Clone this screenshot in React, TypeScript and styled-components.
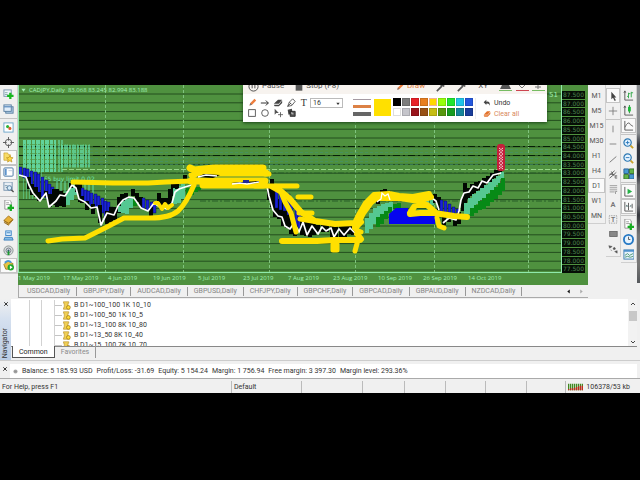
import React from "react";
import styled, { createGlobalStyle, css } from "styled-components";

const GlobalStyle = createGlobalStyle`
  * { box-sizing: border-box; }
  body { margin: 0; background: #000; font-family: Roboto, "Noto Sans", sans-serif; font-size: 7px; line-height: 10px; color: #333; }
  button, select { font: inherit; color: inherit; margin: 0; padding: 0; border: 0; background: none; }
  ul { list-style: none; margin: 0; padding: 0; }
`;

const Stage = styled.main`
  min-height: 100vh;
  padding: 85px 0 86px;
  background: #000;
`;
const Terminal = styled.div`
  background: #f0f0f0;
  overflow: hidden;
`;
const Workspace = styled.div`
  display: flex;
  position: relative;
`;
const ChartArea = styled.section`
  flex: 1;
  min-width: 0;
  display: flex;
  flex-direction: column;
`;

/* tool columns */
const ToolColumn = styled.div<{ $width: number; $top: number }>`
  width: ${(p) => p.$width}px;
  flex: none;
  align-self: flex-start;
  padding-top: ${(p) => p.$top}px;
  display: flex;
  flex-direction: column;
  align-items: center;
  border-right: 1px solid #cfcfcf;
  border-bottom: 1px solid #cfcfcf;
`;
const ToolButton = styled.button<{ $on?: boolean }>`
  width: 100%;
  height: 15px;
  display: grid;
  place-items: center;
  color: #555;
  ${(p) =>
    p.$on &&
    css`
      background: #fafafa;
      outline: 1px solid #c4c4c4;
      outline-offset: -1px;
    `}
`;
const Rule = styled.hr`
  width: 100%;
  height: 1px;
  margin: 1px 0;
  border: 0;
  background: #c4c4c4;
`;
const DesktopEdge = styled.div`
  width: 3px;
  flex: none;
  height: 198px;
  background: linear-gradient(#8a8d90 0 48px, #30333c 60px 90px, #737477 100px 120px, #34363c 130px, #777 150px 180px, #55585c);
`;

/* chart */
const Chart = styled.div`
  position: relative;
  background: #4f913f;
  color: #a0efb4;
`;
const PlotRow = styled.div`
  display: flex;
`;
const Plot = styled.svg`
  flex: 1;
  min-width: 0;
  height: 188px;
  display: block;
`;
const Prices = styled.div`
  width: 26px;
  flex: none;
  padding: 5px 3px 0 0;
  height: 188px;
  display: grid;
  grid-template-rows: repeat(21, 1fr);
`;
const Price = styled.span`
  background: #050d05;
  color: #4d8550;
  font: 6px/8px "DejaVu Sans", sans-serif;
  text-align: center;
  margin-top: 1px;
  overflow: hidden;
`;
const ChartTitle = styled.div`
  position: absolute;
  top: 1px;
  left: 3px;
  display: flex;
  align-items: center;
  gap: 3px;
  font: 6px/9px "Open Sans", sans-serif;
  white-space: pre;
`;
const AdviserLabel = styled.span`
  position: absolute;
  top: 5px;
  right: 30px;
  font: 7px/10px "DejaVu Sans", sans-serif;
`;
const Dates = styled.div`
  display: flex;
  height: 12px;
  overflow: hidden;
`;
const DateMark = styled.span`
  flex: 0 0 45px;
  white-space: nowrap;
  font: 6px/10px "Open Sans", sans-serif;
`;
const ChartTabs = styled.nav`
  height: 13px;
  display: flex;
  align-items: center;
  padding-left: 2px;
  border-left: 1px solid #aaa;
  border-bottom: 1px solid #aaa;
`;
const ChartTab = styled.button`
  padding: 0 6px;
  line-height: 9px;
  border-right: 1px solid #999;
  color: #858585;
`;
const TabArrows = styled.div`
  margin-left: auto;
  padding-right: 4px;
  display: flex;
  gap: 8px;
`;
const ArrowButton = styled.button<{ $dim?: boolean }>`
  display: grid;
  color: ${(p) => (p.$dim ? "#aaa" : "#111")};
`;

/* recorder overlay */
const Recorder = styled.div`
  position: absolute;
  top: 0;
  left: 243px;
  width: 304px;
  height: 37px;
  overflow: hidden;
  background: #fff;
  box-shadow: 0 1px 3px #1c4518;
`;
const RecorderTop = styled.div`
  height: 9px;
  padding: 0 2px 2px 5px;
  display: flex;
  align-items: flex-end;
  overflow: hidden;
  background: #f7f3ef;
  color: #555;
`;
const TopAction = styled.button<{ $hot?: boolean; $push?: boolean }>`
  display: flex;
  align-items: flex-end;
  gap: 3px;
  margin-right: 11px;
  margin-left: ${(p) => (p.$push ? "auto" : 0)};
  font-size: 8px;
  line-height: 12px;
  white-space: nowrap;
  color: ${(p) => (p.$hot ? "#e08040" : "#555")};
`;
const RecorderBody = styled.div`
  display: flex;
  align-items: flex-start;
  padding: 4px 0 0 3px;
`;
const PenGrid = styled.div`
  display: grid;
  grid-template-columns: repeat(5, 12px);
  grid-auto-rows: 10px;
  column-gap: 1px;
`;
const PenButton = styled.button`
  display: grid;
  place-items: center;
`;
const FontSize = styled.select`
  width: 33px;
  height: 10px;
  margin-right: 4px;
  padding-left: 2px;
  border: 1px solid #bbb;
  background: #fff;
  line-height: 8px;
  appearance: none;
`;
const SelectWrap = styled.label`
  position: relative;
  display: flex;
  svg { position: absolute; right: 7px; top: 4px; }
`;
const Weights = styled.div`
  height: 19px;
  margin: 0 3px 0 6px;
  padding: 1px 0;
  display: flex;
  flex-direction: column;
  justify-content: space-between;
`;
const Weight = styled.button<{ $h: number; $c: string }>`
  width: 18px;
  height: ${(p) => p.$h}px;
  background: ${(p) => p.$c};
`;
const CurrentColor = styled.button`
  width: 17px;
  height: 17px;
  margin: 1px 2px 0 0;
  background: #ffe000;
`;
const Palette = styled.div`
  display: grid;
  grid-template-columns: repeat(9, 8px);
  grid-auto-rows: 8px;
  gap: 2px 1px;
`;
const Swatch = styled.button<{ $c: string; $on?: boolean }>`
  background: ${(p) => p.$c};
  border: 1px solid ${(p) => (p.$on ? "#f0b090" : "#0002")};
`;
const Divider = styled.i`
  width: 1px;
  align-self: stretch;
  margin: 0 7px 0 2px;
  background: #eee;
`;
const History = styled.div`
  display: flex;
  flex-direction: column;
  align-items: flex-start;
  gap: 1px;
`;
const HistoryButton = styled.button<{ $hot?: boolean }>`
  display: flex;
  align-items: center;
  gap: 3px;
  white-space: nowrap;
  color: ${(p) => (p.$hot ? "#d98a5c" : "#333")};
`;

/* navigator */
const Navigator = styled.section`
  display: flex;
  padding-top: 1px;
  height: 62px;
`;
const NavHandle = styled.div`
  width: 11px;
  flex: none;
  display: flex;
  flex-direction: column;
  align-items: center;
  justify-content: space-between;
  padding-bottom: 2px;
  background: linear-gradient(#f0f0f0, #d5e0ef 20px, #b9cce4);
`;
const CloseButton = styled.button`
  height: 9px;
  display: grid;
  place-items: center;
`;
const NavName = styled.h2`
  margin: 0;
  writing-mode: vertical-rl;
  transform: rotate(180deg);
  font-size: 7px;
  line-height: 11px;
  font-weight: 400;
`;
const NavBody = styled.div`
  flex: 1;
  min-width: 0;
  padding-right: 3px;
`;
const NavList = styled.div`
  height: 48px;
  display: flex;
  background: #fff;
  border-bottom: 1px solid #888;
`;
const Tree = styled.ul`
  flex: 1;
  overflow: hidden;
  padding: 1px 0 0 18px;
`;
const TreeItem = styled.li`
  height: 10px;
  display: flex;
  align-items: center;
  white-space: pre;
`;
const Guide = styled.i`
  width: 12px;
  height: 10px;
  border-left: 1px solid #d2d2d2;
`;
const Branch = styled(Guide)`
  width: 8px;
  margin-left: 1px;
  background: linear-gradient(#c4c4c4, #c4c4c4) 0 5px / 7px 1px no-repeat;
`;
const ItemLabel = styled.span`
  margin-left: 3px;
`;
const Scrollbar = styled.div`
  width: 9px;
  display: flex;
  flex-direction: column;
  align-items: center;
  background: #f2f2f2;
`;
const Thumb = styled.div`
  width: 8px;
  height: 10px;
  margin: 3px 0 auto;
  background: #c8c8c8;
`;
const NavTabs = styled.div`
  display: flex;
  padding-left: 1px;
  margin-top: -1px;
`;
const NavTab = styled.button<{ $on?: boolean }>`
  height: 12px;
  padding: 0 6px;
  border-right: 1px solid #999;
  color: #8b8b8b;
  ${(p) =>
    p.$on &&
    css`
      position: relative;
      background: #fff;
      border: solid #555;
      border-width: 0 1px 1px;
      color: #222;
    `}
`;
const Account = styled.section`
  height: 18px;
  display: flex;
  padding: 3px 3px 0 0;
  border-top: 1px solid #ccc;
`;
const AccountHandle = styled.div`
  width: 10px;
  padding-left: 2px;
`;
const AccountLine = styled.div`
  flex: 1;
  height: 14px;
  display: flex;
  align-items: center;
  gap: 4px;
  padding-left: 3px;
  background: #fff;
  white-space: nowrap;
`;
const StatusBar = styled.footer`
  height: 15px;
  display: flex;
  align-items: stretch;
  padding-top: 2px;
  border-top: 1px solid #aaa;
  line-height: 11px;
  white-space: nowrap;
`;
const Status = styled.span<{ $w?: number }>`
  flex: ${(p) => (p.$w ? `0 0 ${p.$w}px` : "1")};
  padding-left: 2px;
  display: flex;
  align-items: center;
  gap: 3px;
  ${(p) => p.$w && "border-left: 1px solid #bbb;"}
`;

const glyphs: Record<string, React.ReactNode> = {
  newChart: <><rect x="1" y="1" width="8" height="7" fill="#eef5fb" stroke="#7794ad" /><path d="M2 4h3M2 6h3" stroke="#8aa" /><path d="M8 4v7M4.500 7.500h7" stroke="#17b81e" strokeWidth="2.500" /></>,
  profiles: <><rect x="3" y="3" width="8" height="7" fill="#b8d2ea" stroke="#557b9e" /><rect x="1" y="1" width="8" height="7" fill="#e2eefa" stroke="#557b9e" /><path d="M1 3h8" stroke="#6996c4" strokeWidth="1.500" /></>,
  market: <><rect x="1" y="1" width="10" height="10" fill="#fff" stroke="#6aa4c9" /><circle cx="5" cy="5" r="1.700" fill="#2eb338" /><circle cx="7.500" cy="7" r="1.700" fill="#e06030" /></>,
  cross: <><circle cx="6" cy="6" r="3.500" fill="none" stroke="#555" /><path d="M6 0v4M6 8v4M0 6h4M8 6h4" stroke="#555" /></>,
  star: <><path d="M1 3V1h4l1 2h2v6H1z" fill="#f8dc68" stroke="#c39b24" strokeWidth=".7" /><path d="M7.500 4l1 2 2.500.3-2 1.700.7 3-2.200-1.500L5 11l.7-3-2-1.700L6.500 6z" fill="#ffd944" stroke="#b98b16" strokeWidth=".7" /></>,
  panel: <><rect x="1" y="1" width="10" height="9" rx="1" fill="#fff" stroke="#44729f" /><path d="M2 2h2v7H2z" fill="#5d93cc" /><path d="M6 4h4" stroke="#bcd" /></>,
  tester: <><rect x="1" y="0" width="9" height="9" fill="#e8eef4" stroke="#7592ad" /><path d="M2 4h3M3 6h2" stroke="#79a" /><circle cx="7" cy="6.500" r="2.500" fill="#d7edfa" stroke="#557c9f" /><path d="M9 8.500L11.500 11" stroke="#555" strokeWidth="1.500" /></>,
  order: <><path d="M2 0h5l2 2v8H2z" fill="#fff" stroke="#777" strokeWidth=".8" /><path d="M3.500 3h3M3.500 5h4" stroke="#999" /><path d="M8.500 5v7M5 8.500h7" stroke="#16ad20" strokeWidth="2.500" /></>,
  book: <><path d="M1 6l5-5 5 4-5 6z" fill="#e7b138" stroke="#a77720" /><path d="M1 6l5 3 5-4M1 8l5 3" fill="none" stroke="#906617" /></>,
  server: <><rect x="3" y="1" width="6" height="5" fill="#d9efff" stroke="#3c84c7" /><path d="M4 3h4M2 8h8l1 3H1z" fill="#82bce9" stroke="#3f80bb" /></>,
  signal: <><circle cx="6" cy="6" r="5" fill="#d9dfdf" stroke="#87918f" /><circle cx="6" cy="6" r="2.700" fill="none" stroke="#778" /><path d="M6 6v5" stroke="#18a02c" strokeWidth="2" /><circle cx="6" cy="6" r="1" fill="#357" /></>,
  auto: <><path d="M1 5l4-4 6 3-2 6H3z" fill="#e9c345" stroke="#9a812a" /><path d="M2 3q4-4 7 0" stroke="#4b9ad3" strokeWidth="2" fill="none" /><circle cx="8.500" cy="8" r="3.500" fill="#20a82e" /><path d="M7.500 6l3 2-3 2z" fill="#fff" /></>,
  cursor: <path d="M4 1v9l2-2 2 4 1.500-.8-2-3.400H10z" fill="#444" />,
  plus: <path d="M6 1v10M1 6h10" stroke="#777" />,
  vline: <path d="M6 2v8" stroke="#777" />,
  hline: <path d="M2 6h8" stroke="#777" />,
  trend: <path d="M2 10l8-7" stroke="#666" />,
  channel: <><path d="M1 8l7-6M2 11l8-7M2 6l6 1M4 3l3 5" stroke="#555" fill="none" /><path d="M11 8H8.500v3H11M8.500 9.500H11" stroke="#555" fill="none" strokeWidth=".8" /></>,
  fibo: <path d="M2 2h9M2 4.500h9M2 7h9M2 9.500h6M9 9v3M9 9h2" stroke="#777" strokeWidth=".8" />,
  letterA: <text x="3" y="9.500" fontSize="9" fontWeight="600" fill="#777">A</text>,
  label: <><rect x="1.500" y="2" width="9" height="9" fill="none" stroke="#888" strokeDasharray="1 1" /><text x="3.500" y="9.500" fontSize="8" fontWeight="700" fill="#777">T</text></>,
  box: <rect x="2" y="3" width="9" height="6" fill="#888" stroke="#666" />,
  arrows: <path d="M1 2l4 1-3 2zM6 5l2-1 1 2-2 1zM8 9l3-1v3zM3 7l2 1" fill="#555" stroke="#555" strokeWidth=".6" />,
  bars: <><path d="M2 1v10h9M2 1L1 3M2 1l1 2" fill="none" stroke="#555" /><path d="M6 3v6M4.500 7H6M6 4h2M9 2v6M9 3h2" fill="none" stroke="#30a848" /></>,
  candles: <><path d="M2 1v10h9M2 1L1 3M2 1l1 2" fill="none" stroke="#555" /><path d="M7 0v9" stroke="#208b2e" /><path d="M5.500 2h3v5h-3z" fill="#19ba35" /></>,
  line: <><path d="M2 1v10h9" fill="none" stroke="#555" /><path d="M2 8q4-8 6-3l3 2" fill="none" stroke="#666" /></>,
  zoomIn: <><path d="M8 8l3 3" stroke="#c8a129" strokeWidth="2" /><circle cx="5" cy="5" r="4" fill="#e4f3ff" stroke="#2d78b2" strokeWidth="1.300" /><path d="M3 5h4M5 3v4" stroke="#2878bc" /></>,
  zoomOut: <><path d="M8 8l3 3" stroke="#c8a129" strokeWidth="2" /><circle cx="5" cy="5" r="4" fill="#e4f3ff" stroke="#2d78b2" strokeWidth="1.300" /><path d="M3 5h4" stroke="#2878bc" /></>,
  tile: <><path d="M1 1h5v5H1zM7 7h5v5H7z" fill="#479ad0" stroke="#285f96" /><path d="M7 1h5v5H7zM1 7h5v5H1z" fill="#62b447" stroke="#36712d" /></>,
  scroll: <><path d="M2 1v10h9" fill="none" stroke="#555" /><path d="M5 3v6l5-3z" fill="#25b247" /></>,
  shift: <><path d="M2 1v10h9M6 2v8M10 3v5" fill="none" stroke="#555" /><path d="M3 6h3l-2-2zM9 6H7l2-2z" fill="#466" /></>,
  clock: <><circle cx="6" cy="6" r="5" fill="#e5f3ff" stroke="#2679c5" strokeWidth="2" /><path d="M6 3v3h2" fill="none" stroke="#555" /></>,
  template: <><rect x="1" y="1" width="11" height="10" fill="#e5f2fc" stroke="#3b7db1" /><path d="M1 2h11" stroke="#4c91cd" strokeWidth="2" /><path d="M2 7l3-2 2 2 4-2M2 9l3-1 3 1 3-1" fill="none" stroke="#4d9870" /></>,
  pencil: <><path d="M3 9l1-3 5-5 2 2-5 5z" fill="#ee7d3c" /><path d="M3 9l1-3 2 2z" fill="#777" /></>,
  arrow: <path d="M1 6h9M7 3l3 3-3 3" fill="none" stroke="#333" strokeWidth="1.200" />,
  eraser: <path d="M1 7l5-5h5L7 7zM1 8h6l4-5v3L7 10H2z" fill="#444" />,
  marker: <path d="M2 10l2-5 4-4 3 3-4 5zM4 5l3 3M2 10l4-4" fill="none" stroke="#444" />,
  serifT: <text x="2" y="10" fontFamily="Liberation Serif, serif" fontSize="12" fill="#333">T</text>,
  square: <rect x="2" y="2" width="8" height="8" fill="none" stroke="#444" />,
  circle: <circle cx="6" cy="6" r="4" fill="none" stroke="#444" />,
  move: <><path d="M2 1v7l2-2h3z" fill="#555" /><path d="M9 5v6M6 8h6" stroke="#555" /></>,
  copies: <><path d="M2 2l5-1 1 6-5 1z" fill="#444" /><path d="M5 4h6v6H5z" fill="#555" stroke="#222" /><path d="M7 5v2h2" stroke="#ddd" fill="none" /></>,
  undo: <path d="M1 5l4-4v3q6-1 5 6-1-4-5-3v2z" fill="#444" />,
  clear: <path d="M1 7l5-5h5L7 7zM1 8h6l4-5v3L7 10H2z" fill="#e3732c" />,
  close: <path d="M2.500 2.500l7 7M9.500 2.500l-7 7" stroke="#222" strokeWidth="1.800" />,
  up: <path d="M2 8l4-4 4 4" fill="none" stroke="#444" strokeWidth="2" />,
  down: <path d="M2 4l4 4 4-4" fill="none" stroke="#444" strokeWidth="2" />,
  left: <path d="M9 1v10L3 6z" fill="currentColor" />,
  right: <path d="M3 1v10l6-5z" fill="currentColor" />,
  caret: <path d="M1 2h10L6 9z" fill="currentColor" />,
  script: <><path d="M2 1h7v2H8v6h2v2H2V9h1V3H2z" fill="#f1cf55" stroke="#b7902a" strokeWidth=".8" /><circle cx="8.500" cy="8.500" r="2.500" fill="#ffda33" stroke="#9e7b17" /></>,
  bullet: <><circle cx="6" cy="6" r="5" fill="#aaa" /><path d="M3 5h6M3 7h6" stroke="#777" /></>,
  stop: <rect x="1" y="1" width="10" height="9" fill="#555" />,
  pause: <><circle cx="6" cy="6" r="5" fill="none" stroke="#444" /><path d="M4.500 3v5M7.500 3v5" stroke="#444" /></>,
  wand: <path d="M1 11l6-6M5 3l5 2" stroke="#555" strokeWidth="2" />,
  traffic: <><path d="M1 1v10M4 1v10M7 1v10M10 1v10M13 1v10M16 1v10M19 1v10M22 1v10" stroke="#3e8a20" strokeWidth="2" /><path d="M1 9v2M4 8v3M7 8v3M10 7v4M13 6v5M16 5v6M19 4v7M22 4v7" stroke="#c7281f" strokeWidth="2" /></>,
};

function Glyph({ name, size = 10, wide = 12 }: { name: string; size?: number; wide?: number }) {
  return (
    <svg width={(size * wide) / 12} height={size} viewBox={`0 0 ${wide} 12`} aria-hidden="true">
      {glyphs[name]}
    </svg>
  );
}

function Tools({ names, on = [], size = 11 }: { names: string[]; on?: string[]; size?: number }) {
  return (
    <>
      {names.map((n, i) =>
        n === "-" ? <Rule key={i} /> : (
          <ToolButton key={i} $on={on.includes(n)} aria-label={n}>
            <Glyph name={n} size={size} />
          </ToolButton>
        )
      )}
    </>
  );
}

const K = "#020802", B = "#1a22d8", T = "#55c892", G = "#078a16";
/* candle columns: x, top, bottom, colour */
const columns: [number, number, number, string][] = [
  [19, 167, 176, B], [23, 168, 178, B], [26, 169, 180, B], [30, 171, 185, B], [34, 172, 190, B], [37, 174, 195, B], [41, 177, 197, B], [45, 180, 198, B], [48, 184, 197, B], [51, 187, 200, B],
  [27, 177, 189, K], [30, 184, 195, K], [34, 187, 197, K], [37, 192, 201, K], [44, 191, 197, K], [48, 194, 207, K], [52, 189, 205, K], [55, 189, 207, K], [59, 191, 206, K], [62, 193, 207, K],
  [66, 191, 205, T], [70, 186, 200, T], [73, 183, 195, T], [69, 183, 188, K], [75, 180, 192, K], [78, 183, 202, K],
  [81, 188, 197, B], [84, 190, 202, B], [87, 191, 204, B], [90, 193, 206, B], [94, 194, 207, B], [97, 196, 210, B], [101, 198, 213, B], [104, 201, 220, B], [107, 202, 220, B], [110, 207, 216, B],
  [80, 196, 203, K], [85, 201, 210, K], [91, 204, 214, K], [98, 205, 223, K], [105, 211, 224, K], [109, 207, 222, K], [113, 207, 220, K], [117, 197, 213, K], [120, 194, 209, K], [124, 193, 205, K], [131, 189, 196, K],
  [118, 206, 212, T], [121, 201, 213, T], [125, 199, 214, T], [129, 198, 208, T], [133, 199, 206, G], [135, 193, 202, K], [139, 197, 207, K],
  [142, 198, 208, B], [146, 200, 210, B], [150, 202, 213, B], [153, 201, 213, B], [149, 207, 216, K], [157, 193, 202, K], [160, 198, 207, K], [164, 198, 209, K],
  [168, 189, 204, K], [171, 184, 196, K], [173, 188, 204, T], [177, 186, 203, T], [181, 184, 199, T], [175, 183, 189, K], [183, 175, 183, K], [186, 188, 198, G], [190, 186, 195, G], [194, 187, 192, G], [197, 187, 190, G],
  [267, 186, 200, K], [270, 179, 207, K], [273, 190, 217, K], [277, 199, 219, K], [281, 201, 226, K], [285, 211, 228, K], [289, 214, 234, K], [293, 218, 236, K],
  [275, 190, 208, B], [279, 189, 210, B], [283, 191, 211, B], [287, 194, 215, B], [290, 200, 219, B], [295, 205, 226, B], [298, 210, 228, B],
  [300, 217, 235, K], [304, 219, 236, K], [308, 221, 237, K], [312, 222, 235, K], [316, 225, 233, K], [321, 222, 232, K], [325, 225, 232, K], [330, 224, 237, K], [334, 225, 239, K], [339, 224, 237, K], [343, 224, 239, K], [347, 226, 234, K], [351, 222, 235, K], [355, 223, 238, K],
  [365, 218, 233, T], [369, 213, 229, T], [373, 208, 224, T], [377, 206, 220, T], [381, 204, 217, T], [385, 203, 213, T], [389, 202, 211, T], [376, 217, 227, G], [380, 214, 224, G], [384, 211, 219, G], [388, 207, 213, G], [393, 204, 208, G], [397, 203, 208, G],
  [376, 195, 204, K], [380, 190, 198, K], [383, 189, 200, K], [387, 191, 200, K],
  [420, 202, 207, T], [425, 200, 207, T], [430, 198, 205, T], [433, 194, 203, K], [437, 197, 210, K], [440, 200, 214, B], [444, 201, 215, B], [448, 204, 215, B], [452, 207, 217, B], [456, 209, 218, B], [442, 215, 225, K], [447, 216, 222, K], [453, 214, 226, K], [457, 212, 224, K],
  [461, 198, 211, K], [463, 183, 204, K], [466, 188, 199, K], [470, 184, 196, K], [474, 182, 193, K], [478, 181, 190, K], [482, 178, 188, K], [486, 176, 184, K], [490, 173, 182, K], [494, 170, 178, K], [498, 169, 174, K],
  [464, 203, 217, T], [468, 198, 214, T], [472, 194, 209, T], [476, 191, 204, T], [480, 188, 200, T], [484, 185, 198, T], [488, 182, 193, T], [492, 179, 190, T], [496, 176, 185, T], [500, 172, 179, T],
  [470, 208, 216, G], [474, 205, 213, G], [478, 201, 210, G], [482, 198, 209, G], [486, 194, 206, G], [490, 190, 202, G], [494, 187, 199, G], [498, 183, 195, G], [501, 178, 191, G],
];

function PricePlot() {
  return (
    <Plot viewBox="18 85 544 188" preserveAspectRatio="none" role="img" aria-label="CADJPY daily chart with hand drawn marks">
      {Array.from({ length: 21 }, (_, i) => (
        <path key={i} d={`M18 ${94 + i * 8.8}h544`} stroke="#244f1f" />
      ))}
      {[105, 183, 269, 355, 434, 528].map((x) => (
        <path key={x} d={`M${x}.5 85v188`} stroke="#7fc37e" strokeDasharray="3 2" />
      ))}
      {[149, 152, 158, 161, 164].map((y) => (
        <path key={y} d={`M75 ${y}.5h487`} stroke="#429078" strokeDasharray="3 2" opacity=".55" />
      ))}
      <path d="M18 146.500h544M18 155.500h544" stroke="#071e06" strokeDasharray="7 3 2 3" />
      <path d="M62 169.500h500" stroke="#97d688" strokeDasharray="5 2" />
      <path d="M62 173h500M200 201h362" stroke="#295f29" strokeDasharray="6 2 2 2" />
      <g fill="none" stroke="#65dfaa">
        <path d="M23 156h33" strokeWidth="32" strokeDasharray="3 1 4 1" opacity=".85" />
        <path d="M58 156h6" strokeWidth="32" strokeDasharray="2 1" opacity=".6" />
        <path d="M61 156h29" strokeWidth="23" strokeDasharray="2 1 4 1" opacity=".7" />
        <path d="M23 185h20" strokeWidth="28" strokeDasharray="1 2" opacity=".5" />
        <path d="M56 188h38" strokeWidth="14" strokeDasharray="2 2" opacity=".5" />
      </g>
      <path d="M20 144.500h70M20 149.500h70M20 153.500h70M20 159.500h70M20 163.500h70M20 168.500h50" stroke="#4f913f" opacity=".6" strokeDasharray="3 1 1 1" />
      <g fill="#70e3af" fontFamily="DejaVu Sans, sans-serif" fontSize="6">
        <text x="36" y="181">9865 buy limit 0.02</text>
      </g>
      {columns.map(([x, a, b, c], i) => (
        <rect key={i} x={x} y={a} width={c === B ? 3 : 4} height={b - a} fill={c} stroke={c === B ? "#04083c" : "none"} strokeWidth=".4" />
      ))}
      <path d="M389 214l7-6h12l1 7h26v9h-46z" fill="#0505f0" />
      <g fill="none" stroke="#fff" strokeWidth="1.700" strokeLinejoin="round">
        <path d="M19 175l7 2 3 8 4 8 7 8 3-4 3-4 3 14 7-6 4-6 5 1 7-11 4 3 3 11 6 3 6 6 6-1 4 18 6-12 7 2 4-9 5-6 6-3 5 1 7 10 7 3 6-8 6 4 7 2 5-6 3-11 4-3 6-2 10-3" />
        <path d="M267 186l2 10 4 14 5 6 4 1 3 9 5 3 4-6 5 9 4-10 4 13 5-9 6 8 4-7 4 4 5-3 3 9 5-8 5 6 6-7 5 5" />
        <path d="M432 198l4 3 3 9M443 223l6-5 7 2 3-9 2-11 3-7 5-1 4-6 5 2 4-7 5 2 6-8 8-2" />
      </g>
      <rect x="497" y="144" width="8" height="27" rx="3" fill="#c51f3a" />
      <path d="M499 148l4 3-4 3 4 3-4 3 4 3-4 3 4 3M503 148l-4 3 4 3-4 3 4 3-4 3 4 3-4 3" fill="none" stroke="#f8d6d6" strokeDasharray="2 1" />
      <g fill="none" stroke="#ffe000" strokeLinecap="round" strokeLinejoin="round">
        <path d="M73 182l40 1h35l18-1 25-1M48 241l14-2 23-1 20-10 19-10h10l16 0q20 0 28-7t16-26" strokeWidth="5" />
        <path d="M155 203l3 0 4 6 3-5 3 4 4-3" strokeWidth="4" />
        <path d="M190 168l4 2 20-2h49M192 175l5-2h69M191 181h74M203 185h60" strokeWidth="7" />
        <path d="M265 174h4M255 186h42" strokeWidth="5" />
        <path d="M272 187l9 5 4 10 6 11 5 19" strokeWidth="5" />
        <path d="M276 187l13 11 12 14 14 9 20 3 20-1 4-8 7-12 8-8 15-1 10 2 14 1 16-3" strokeWidth="6" />
        <path d="M356 225l6-12 8-11 6-5" strokeWidth="8" />
        <path d="M298 197h13M299 213h13M300 219l18 3" strokeWidth="5" />
        <path d="M282 241h35l18-1h25" strokeWidth="6" />
        <path d="M333 244v6h4v-6M360 215l-4 15 5 2M358 240l-3 11" strokeWidth="5" />
        <path d="M355 228l6-6M357 234l4 5" strokeWidth="6" />
        <path d="M376 198h24l19 3 12-4M410 214l10-1h14l20 3 13 1M414 207l-4 6M417 205h10l8 7" strokeWidth="6" />
        <path d="M437 218l2 8 5 2" strokeWidth="5" />
      </g>
      <path d="M197 177l7-3 16 1-7 3zM231 183l10-1 18-1v2l-15 1z" fill={K} />
      <path d="M198 177l8-2 11 1M232 184l8-1 7 1 12-2M377 202l4-3 1-6 3 3 3-2 2 6" fill="none" stroke="#fff" strokeWidth="1.300" />
      <path d="M243 180h6v3h-6z" fill="#1e2799" />
      <path d="M18.500 85v188M18 272.500h544M561.500 85v188" fill="none" stroke="#8fe9ac" />
    </Plot>
  );
}

const days = ["1 May 2019", "17 May 2019", "4 Jun 2019", "19 Jun 2019", "5 Jul 2019", "23 Jul 2019", "7 Aug 2019", "23 Aug 2019", "10 Sep 2019", "26 Sep 2019", "14 Oct 2019"];
const pairs = ["USDCAD", "GBPJPY", "AUDCAD", "GBPUSD", "CHFJPY", "GBPCHF", "GBPCAD", "GBPAUD", "NZDCAD"];
const palette = ["#000", "#7d7d7d", "#e81f27", "#e87e20", "#ffd800", "#97ff0c", "#20e52f", "#20c5e8", "#2458df", "#fff", "#c5c5cb", "#99131b", "#985015", "#c6bd14", "#57970e", "#179c20", "#15859a", "#193d9b"];
const scripts = ["B D1~100_100 1K 10_10", "B D1~100_50 1K 10_5", "B D1~13_100 8K 10_80", "B D1~13_50 8K 10_40", "B D1~15_100 7K 10_70"];
const account = ["Balance: 5 185.93 USD", "Profit/Loss: -31.69", "Equity: 5 154.24", "Margin: 1 756.94", "Free margin: 3 397.30", "Margin level: 293.36%"];

function RecorderPanel() {
  return (
    <Recorder>
      <RecorderTop>
        <TopAction><Glyph name="pause" size={11} />Pause</TopAction>
        <TopAction><Glyph name="stop" size={8} />Stop (F8)</TopAction>
        <TopAction $hot $push><Glyph name="pencil" size={9} />Draw</TopAction>
        <TopAction aria-label="Effects"><Glyph name="wand" size={10} /></TopAction>
        <TopAction aria-label="Magic"><Glyph name="wand" size={10} /></TopAction>
        <TopAction>XY</TopAction>
        <svg width="46" height="7" viewBox="0 0 46 7" aria-hidden="true">
          <path d="M3 0h7l2 4H1z" fill="#555" /><path d="M20 0l3 3 3-3M36 2h6M39 0v4" stroke="#777" fill="none" />
          <path d="M0 5.500h13M33 5.500h13" stroke="#76bc62" /><path d="M17 5.500h13" stroke="#cd4550" />
        </svg>
      </RecorderTop>
      <RecorderBody>
        <PenGrid>
          {["pencil", "arrow", "eraser", "marker", "serifT", "square", "circle", "move", "copies"].map((n) => (
            <PenButton key={n} aria-label={n}><Glyph name={n} size={10} /></PenButton>
          ))}
        </PenGrid>
        <SelectWrap>
          <FontSize aria-label="Font size" defaultValue="16"><option>16</option></FontSize>
          <Glyph name="caret" size={4} />
        </SelectWrap>
        <Weights>
          <Weight $h={1} $c="#a59aa2" aria-label="Thin" />
          <Weight $h={3} $c="#dc8145" aria-label="Medium" />
          <Weight $h={4} $c="#666" aria-label="Thick" />
        </Weights>
        <CurrentColor aria-label="Current colour" />
        <Palette>
          {palette.map((c, i) => <Swatch key={c} $c={c} $on={i === 4} aria-label={c} />)}
        </Palette>
        <Divider />
        <History>
          <HistoryButton><Glyph name="undo" size={8} />Undo</HistoryButton>
          <HistoryButton $hot><Glyph name="clear" size={8} />Clear all</HistoryButton>
        </History>
      </RecorderBody>
    </Recorder>
  );
}

export default function App() {
  return (
    <Stage>
      <GlobalStyle />
      <Terminal>
        <Workspace>
          <ToolColumn $width={18} $top={2}>
            <Tools names={["newChart", "profiles", "-", "market", "cross", "star", "panel", "tester", "-", "order", "book", "server", "signal", "auto"]} on={["star", "panel", "auto"]} />
          </ToolColumn>
          <ChartArea>
            <Chart>
              <PlotRow>
                <PricePlot />
                <Prices>
                  {Array.from({ length: 21 }, (_, i) => <Price key={i}>{(87.5 - i / 2).toFixed(3)}</Price>)}
                </Prices>
              </PlotRow>
              <Dates>{days.map((d) => <DateMark key={d}>{d}</DateMark>)}</Dates>
              <ChartTitle><Glyph name="caret" size={5} />CADJPY,Daily  83.068 83.245 82.994 83.188</ChartTitle>
              <AdviserLabel>51</AdviserLabel>
            </Chart>
            <ChartTabs>
              {pairs.map((p) => <ChartTab key={p}>{p},Daily</ChartTab>)}
              <TabArrows>
                <ArrowButton aria-label="Previous charts"><Glyph name="left" size={5} /></ArrowButton>
                <ArrowButton $dim aria-label="Next charts"><Glyph name="right" size={5} /></ArrowButton>
              </TabArrows>
            </ChartTabs>
          </ChartArea>
          <ToolColumn $width={18} $top={3}>
            {["M1", "M5", "M15", "M30", "H1", "H4", "D1", "W1", "MN"].map((t) => <ToolButton key={t} $on={t === "D1"}>{t}</ToolButton>)}
          </ToolColumn>
          <ToolColumn $width={15} $top={3}>
            <Tools names={["cursor", "plus", "-", "vline", "hline", "trend", "channel", "fibo", "letterA", "label", "box", "arrows"]} on={["cursor"]} size={10} />
          </ToolColumn>
          <ToolColumn $width={16} $top={3}>
            <Tools names={["bars", "candles", "line", "-", "zoomIn", "zoomOut", "tile", "-", "scroll", "shift", "-", "order", "clock", "template"]} on={["line", "scroll", "shift"]} />
          </ToolColumn>
          <DesktopEdge />
          <RecorderPanel />
        </Workspace>
        <Navigator>
          <NavHandle>
            <CloseButton aria-label="Close navigator"><Glyph name="close" size={6} /></CloseButton>
            <NavName>Navigator</NavName>
          </NavHandle>
          <NavBody>
            <NavList>
              <Tree>
                {scripts.map((s) => (
                  <TreeItem key={s}><Guide /><Guide /><Branch /><Glyph name="script" size={9} /><ItemLabel>{s}</ItemLabel></TreeItem>
                ))}
              </Tree>
              <Scrollbar>
                <CloseButton aria-label="Scroll up"><Glyph name="up" size={6} /></CloseButton>
                <Thumb />
                <CloseButton aria-label="Scroll down"><Glyph name="down" size={6} /></CloseButton>
              </Scrollbar>
            </NavList>
            <NavTabs><NavTab $on>Common</NavTab><NavTab>Favorites</NavTab></NavTabs>
          </NavBody>
        </Navigator>
        <Account>
          <AccountHandle><CloseButton aria-label="Close terminal"><Glyph name="close" size={6} /></CloseButton></AccountHandle>
          <AccountLine>
            <Glyph name="bullet" size={5} />
            {account.map((a) => <span key={a}>{a}</span>)}
          </AccountLine>
        </Account>
        <StatusBar>
          <Status>For Help, press F1</Status>
          <Status $w={70}>Default</Status>
          <Status $w={61} /><Status $w={42} /><Status $w={41} /><Status $w={40} /><Status $w={41} /><Status $w={39} />
          <Status $w={75}><Glyph name="traffic" size={8} wide={23} />106378/53 kb</Status>
        </StatusBar>
      </Terminal>
    </Stage>
  );
}
